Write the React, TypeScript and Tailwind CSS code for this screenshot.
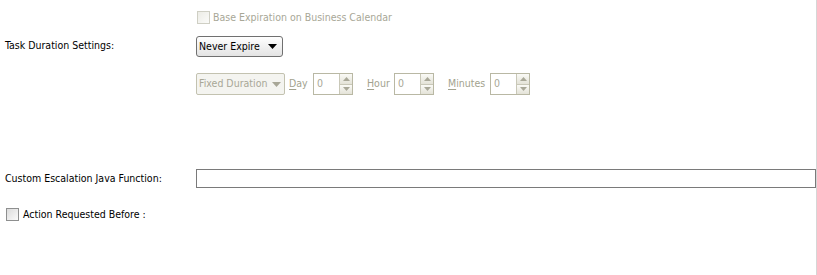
import React from "react";

const font = { fontFamily: '"DejaVu Sans Condensed", "Liberation Sans", Arial, sans-serif' };

function Spinner() {
  return (
    <div className="flex h-[22px] w-[40px] border border-[#b9b8a4] bg-white">
      <div className="flex flex-1 items-center pl-[3px] text-[#a8a797]">0</div>
      <div className="flex w-[13px] flex-col border-l border-[#c9c8b8]">
        <div className="flex flex-1 items-center justify-center border-b border-[#c9c8b8] bg-gradient-to-b from-[#fafaf6] to-[#e4e3d8]">
          <svg width="7" height="4" viewBox="0 0 7 4"><path d="M0 4 L3.5 0 L7 4 Z" fill="#a9a898" /></svg>
        </div>
        <div className="flex flex-1 items-center justify-center bg-gradient-to-b from-[#fafaf6] to-[#e4e3d8]">
          <svg width="7" height="4" viewBox="0 0 7 4"><path d="M0 0 L3.5 4 L7 0 Z" fill="#a9a898" /></svg>
        </div>
      </div>
    </div>
  );
}

function UL({ first, rest }: { first: string; rest: string }) {
  return (
    <span className="text-[#a3a28e]">
      <span className="underline underline-offset-2">{first}</span>
      {rest}
    </span>
  );
}

export default function App() {
  return (
    <div className="relative h-[275px] w-[817px] overflow-hidden bg-white text-[10.5px] text-black" style={font}>
      <div className="absolute right-0 top-0 h-full w-px bg-[#d6d6d6]" />
      <div className="flex flex-col">
        {/* row 1 */}
        <div className="mt-[10px] flex h-[14px] items-center pl-[197px]">
          <div className="h-[13px] w-[13px] border border-[#cfcfc4] bg-gradient-to-br from-[#ececE6] to-[#fbfbf9]" />
          <span className="ml-[3px] pt-[1px] text-[#a8a797]">Base Expiration on Business Calendar</span>
        </div>
        {/* row 2 */}
        <div className="mt-[12px] flex h-[21px]">
          <div className="w-[196px] pl-[5px] pt-[2px]">Task Duration Settings:</div>
          <div className="flex w-[87px] items-center justify-between rounded-[3px] border border-[#707070] bg-gradient-to-b from-[#ffffff] to-[#e3e3e3] pl-[2px] pr-[5px]">
            <span>Never Expire</span>
            <svg width="9" height="5" viewBox="0 0 9 5"><path d="M0 0 L9 0 L4.5 5 Z" fill="#000" /></svg>
          </div>
        </div>
        {/* row 3 */}
        <div className="mt-[16px] flex h-[22px] items-center pl-[196px]">
          <div className="flex h-[22px] w-[89px] items-center justify-between rounded-[2px] border border-[#c3c2b0] bg-[#f4f4f0] pl-[2px] pr-[3px] text-[#a8a797]">
            <span>Fixed Duration</span>
            <svg width="9" height="5" viewBox="0 0 9 5"><path d="M0 0 L9 0 L4.5 5 Z" fill="#a8a797" /></svg>
          </div>
          <div className="ml-[4px] w-[24px]"><UL first="D" rest="ay" /></div>
          <Spinner />
          <div className="ml-[14px] w-[27px]"><UL first="H" rest="our" /></div>
          <Spinner />
          <div className="ml-[14px] w-[42px]"><UL first="M" rest="inutes" /></div>
          <Spinner />
        </div>
        {/* row 4 */}
        <div className="mt-[74px] flex h-[19px] items-center">
          <div className="w-[196px] pl-[5px]">Custom Escalation Java Function:</div>
          <div className="h-[19px] w-[620px] border border-[#7a7a7a] bg-white" />
        </div>
        {/* row 5 */}
        <div className="mt-[19px] flex h-[14px] items-center pl-[6px]">
          <div className="h-[13px] w-[13px] border border-[#8e8f8f] bg-gradient-to-br from-[#dcdcdc] to-[#fbfbfb]" />
          <span className="ml-[4px] pt-[1px]">Action Requested Before :</span>
        </div>
      </div>
    </div>
  );
}
